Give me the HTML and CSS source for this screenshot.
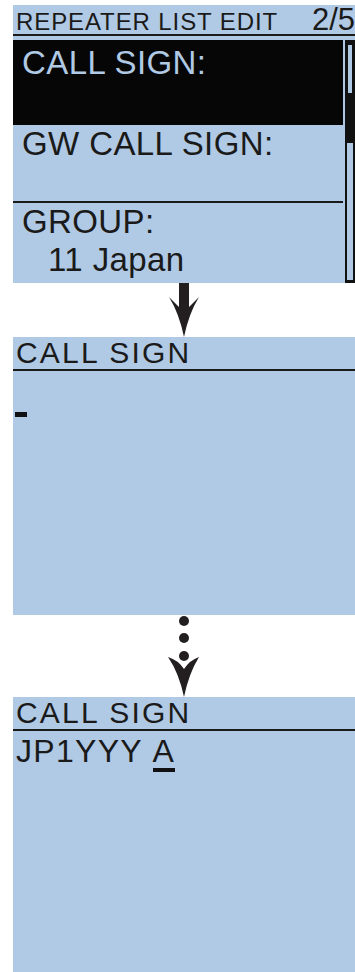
FILE: index.html
```html
<!DOCTYPE html>
<html lang="en">
<head>
  <meta charset="UTF-8" />
  <meta name="viewport" content="width=device-width, initial-scale=1.0"/>
  <title>Repeater List Edit</title>
  <link rel="stylesheet" href="styles.css">
</head>
<body>
  <div class="page">

    <div class="screen menu">
      <div class="title-bar">
        <span>REPEATER LIST EDIT</span>
        <span class="page-no">2/5</span>
      </div>
      <div class="list-area">
        <div class="list">
          <div class="item selected">CALL SIGN:</div>
          <div class="item second">GW CALL SIGN:</div>
          <div class="item third">
            <div>GROUP:</div>
            <div class="value">11 Japan</div>
          </div>
        </div>
        <div class="scrollbar">
          <div class="thumb"><div class="glint"></div></div>
          <div class="track"></div>
        </div>
      </div>
    </div>

    <svg class="arrow step" viewBox="0 0 355 54" width="355" height="54">
      <path d="M179,0 H189 V24 L199,14 Q189,30 184,54 Q179,30 169,14 L179,24 Z" fill="#231f20"/>
    </svg>

    <div class="screen entry">
      <div class="entry-title">CALL SIGN</div>
      <div class="cursor"></div>
    </div>

    <svg class="arrow more" viewBox="0 0 355 82" width="355" height="82">
      <circle cx="184" cy="6" r="5" fill="#231f20"/>
      <circle cx="184" cy="23" r="5" fill="#231f20"/>
      <circle cx="184" cy="41" r="5" fill="#231f20"/>
      <path d="M168,42 Q178,45 184,54 Q190,45 199,42 Q189,58 184,82 Q179,58 168,42 Z" fill="#231f20"/>
    </svg>

    <div class="screen entry last">
      <div class="entry-title">CALL SIGN</div>
      <div class="typed">JP1YYY <span class="current">A</span></div>
    </div>

  </div>
</body>
</html>
```

FILE: styles.css
```css
body {
  margin: 0;
  background: white;
  font-family: "Liberation Sans", Arial, sans-serif;
  color: #1a1a1a;
}

.page {
  width: 355px;
  padding-top: 5px;
}

.screen {
  margin-left: 13px;
  background: #b0c9e4;
}

.menu {
  height: 278px;
}

.title-bar {
  display: flex;
  justify-content: space-between;
  align-items: baseline;
  height: 29px;
  line-height: 29px;
  padding-left: 3px;
  font-size: 24px;
  letter-spacing: 0.9px;
  border-bottom: 2px solid #1a1a1a;
  white-space: nowrap;
}

.page-no {
  letter-spacing: 0;
  font-size: 31px;
}

.list-area {
  display: flex;
  margin-top: 4px;
  height: 243px;
}

.list {
  width: 330px;
}

.item {
  padding-left: 9px;
  font-size: 33px;
  line-height: 38px;
  letter-spacing: 0.4px;
}

.selected {
  height: 80px;
  padding-top: 5px;
  background: #060606;
  color: #b0c9e4;
  line-height: 36px;
}

.second {
  height: 76px;
  padding-top: 0;
  border-bottom: 2px solid #1a1a1a;
}

.third {
  height: 78px;
}

.third .value {
  padding-left: 26px;
}

.scrollbar {
  display: flex;
  flex-direction: column;
  margin-left: 2px;
  width: 10px;
}

.thumb {
  height: 96px;
  padding: 5px 3px 0 3px;
  background: #111;
}

.glint {
  height: 48px;
  background: #b0c9e4;
}

.track {
  flex: 1;
  border: 2px solid #111;
  border-bottom-width: 3px;
  background: #b0c9e4;
}

.arrow {
  display: block;
}

.entry {
  height: 278px;
}

.entry.last {
  height: 275px;
}

.entry-title {
  height: 32px;
  line-height: 32px;
  padding-left: 3px;
  font-size: 30px;
  letter-spacing: 2.2px;
  border-bottom: 2px solid #1a1a1a;
}

.cursor {
  width: 12px;
  height: 5px;
  margin: 41px 0 0 2px;
  background: #111;
}

.typed {
  padding-left: 3px;
  font-size: 32px;
  line-height: 40px;
  letter-spacing: 1.3px;
}

.current {
  display: inline-block;
  border-bottom: 4px solid #111;
  line-height: 34px;
}
```
